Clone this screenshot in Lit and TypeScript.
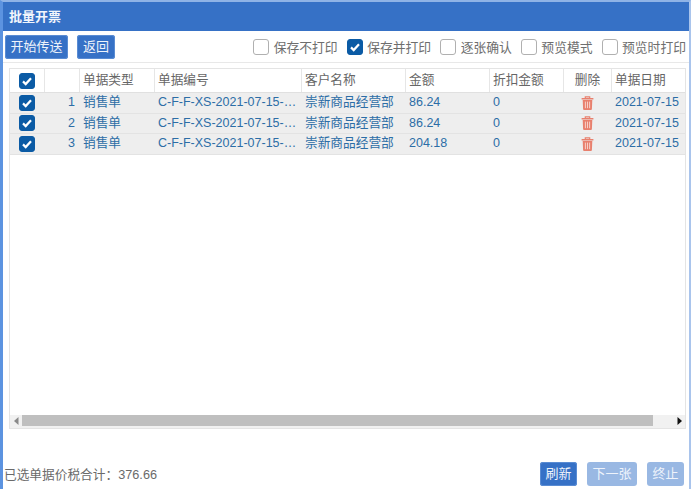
import { LitElement, html, css, svg } from "lit";
import { customElement, property } from "lit/decorators.js";

interface Row {
  no: number;
  type: string;
  code: string;
  customer: string;
  amount: string;
  discount: string;
  date: string;
}

// the reference only shows the truncated bill number, so keep it as shown
const rows: Row[] = [
  { no: 1, type: "销售单", code: "C-F-F-XS-2021-07-15-…", customer: "崇新商品经营部", amount: "86.24", discount: "0", date: "2021-07-15" },
  { no: 2, type: "销售单", code: "C-F-F-XS-2021-07-15-…", customer: "崇新商品经营部", amount: "86.24", discount: "0", date: "2021-07-15" },
  { no: 3, type: "销售单", code: "C-F-F-XS-2021-07-15-…", customer: "崇新商品经营部", amount: "204.18", discount: "0", date: "2021-07-15" },
];

const options = [
  { label: "保存不打印", checked: false },
  { label: "保存并打印", checked: true },
  { label: "逐张确认", checked: false },
  { label: "预览模式", checked: false },
  { label: "预览时打印", checked: false },
];

const trash = svg`<svg width="13" height="14" viewBox="0 0 13 14">
  <path d="M4.3 1.9V.8h4.4v1.1" fill="none" stroke="#e8806e" stroke-width="1.2"/>
  <path d="M.6 2h11.8v1.5H.6z" fill="#e8806e"/>
  <path d="M1.7 4h9.6l-.4 9a1 1 0 0 1-1 1H3.1a1 1 0 0 1-1-1z" fill="#e8806e"/>
  <path d="M4.4 5.6v6.6M6.5 5.6v6.6M8.6 5.6v6.6" stroke="#f6cfc8" stroke-width="1"/>
</svg>`;

@customElement("check-box")
export class CheckBox extends LitElement {
  @property({ type: Boolean }) checked = false;

  static styles = css`
    :host {
      display: block;
      width: 16px;
      height: 16px;
    }
    .box {
      width: 16px;
      height: 16px;
      box-sizing: border-box;
      border-radius: 3px;
      border: 1px solid #b0b0b0;
      background: #fff;
    }
    .box.on {
      border-color: #0b5ba5;
      background: #0b5ba5;
    }
    svg {
      display: block;
    }
  `;

  render() {
    return html`<div class="box ${this.checked ? "on" : ""}">
      ${this.checked
        ? html`<svg width="14" height="14" viewBox="0 0 14 14">
            <path d="M3 7.4l2.7 2.7L11 4.2" fill="none" stroke="#fff" stroke-width="2.2"/>
          </svg>`
        : ""}
    </div>`;
  }
}

@customElement("app-root")
export class AppRoot extends LitElement {
  static styles = css`
    :host {
      display: block;
      width: 691px;
      height: 489px;
      overflow: hidden;
      font-family: "Liberation Sans", "Noto Sans CJK SC", sans-serif;
      font-size: 12.7px;
      color: #666;
      background: #fff;
    }
    .window {
      box-sizing: border-box;
      height: 489px;
      display: flex;
      flex-direction: column;
      border-top: 2px solid #8fb3e6;
      border-left: 3px solid #5c93e0;
      border-right: 2px solid #a9c4ec;
    }
    .title {
      height: 29px;
      flex: none;
      background: #3671c6;
      color: #f2f6fc;
      font-weight: 700;
      font-size: 13px;
      line-height: 29px;
      padding-left: 6px;
    }
    .toolbar {
      height: 32px;
      flex: none;
      display: flex;
      align-items: center;
      padding: 0 3px 0 2px;
      border-bottom: 1px solid #e8e8e8;
      box-sizing: border-box;
    }
    .btn {
      height: 24px;
      line-height: 24px;
      padding: 0 5.5px;
      border-radius: 3px;
      background: #3671c6;
      color: #eef3fb;
      font-size: 13px;
      box-shadow: 0 0 0 1px #5a8cd3 inset;
    }
    .btn.off {
      background: #99b8e3;
      box-shadow: none;
    }
    .back {
      margin-left: 9px;
      padding: 0 6px;
    }
    .options {
      margin-left: auto;
      display: flex;
      gap: 9px;
    }
    .option {
      display: flex;
      align-items: center;
      gap: 4.5px;
      font-size: 12.8px;
      color: #6e6e6e;
    }
    .grid-wrap {
      margin: 5px 3px 0 6px;
      height: 361px;
      flex: none;
      box-sizing: border-box;
      border: 1px solid #e4e4e4;
      display: flex;
      flex-direction: column;
    }
    .body {
      flex: 1;
      overflow: hidden;
    }
    .row {
      display: grid;
      grid-template-columns: 35px 35px 75px 147px 104px 84px 74px 48px 72px;
      align-items: center;
      height: 20.5px;
      box-sizing: border-box;
      background: #eeeeee;
      color: #2c6da6;
      border-bottom: 1px solid #e3e3e3;
      white-space: nowrap;
    }
    .row.head {
      height: 24px;
      background: #fff;
      color: #666;
      border-bottom: 1px solid #e0e0e0;
      align-items: stretch;
    }
    .cell {
      padding: 0 3px;
      min-width: 0;
      line-height: 19px;
    }
    .cell.pick {
      padding: 0 0 0 9px;
    }
    .head .cell {
      display: flex;
      align-items: center;
      line-height: 21px;
      border-right: 1px solid #e6e6e6;
    }
    .head .cell:last-child {
      border-right: none;
    }
    .latin {
      font-size: 12.5px;
    }
    .center {
      display: flex;
      justify-content: center;
    }
    .cell.trash {
      padding: 0 5px 0 3px;
    }
    .num {
      text-align: right;
      padding-right: 5px;
    }
    .scrollbar {
      flex: none;
      height: 13px;
      display: flex;
      align-items: stretch;
      background: #f1f1f1;
    }
    .arrow {
      width: 12px;
      flex: none;
      padding-bottom: 2px;
      display: flex;
      align-items: center;
      justify-content: center;
    }
    .thumb {
      width: 631px;
      flex: none;
      margin-bottom: 2px;
      background: #bfbfbf;
    }
    .track {
      flex: 1;
    }
    .footer {
      flex: 1;
      display: flex;
      align-items: flex-end;
      padding: 0 5px 3px 1px;
      color: #6a6a6a;
    }
    .sum {
      flex: 1;
      line-height: 22px;
    }
    .actions {
      display: flex;
      gap: 10px;
    }
  `;

  render() {
    return html`<div class="window">
      <div class="title">批量开票</div>
      <div class="toolbar">
        <div class="btn">开始传送</div>
        <div class="btn back">返回</div>
        <div class="options">
          ${options.map(
            (o) => html`<div class="option">
              <check-box ?checked=${o.checked}></check-box><span>${o.label}</span>
            </div>`
          )}
        </div>
      </div>
      <div class="grid-wrap">
        <div class="body">
          <div class="row head">
            <div class="cell pick"><check-box checked></check-box></div>
            <div class="cell"></div>
            <div class="cell"><span class="label">单据类型</span></div>
            <div class="cell"><span class="label">单据编号</span></div>
            <div class="cell"><span class="label">客户名称</span></div>
            <div class="cell"><span class="label">金额</span></div>
            <div class="cell"><span class="label">折扣金额</span></div>
            <div class="cell center"><span class="label">删除</span></div>
            <div class="cell"><span class="label">单据日期</span></div>
          </div>
          ${rows.map(
            (r) => html`<div class="row">
              <div class="cell pick"><check-box checked></check-box></div>
              <div class="cell num latin">${r.no}</div>
              <div class="cell">${r.type}</div>
              <div class="cell latin">${r.code}</div>
              <div class="cell">${r.customer}</div>
              <div class="cell latin">${r.amount}</div>
              <div class="cell latin">${r.discount}</div>
              <div class="cell center trash">${trash}</div>
              <div class="cell latin">${r.date}</div>
            </div>`
          )}
        </div>
        <div class="scrollbar">
          <div class="arrow">
            <svg width="5" height="8" viewBox="0 0 5 8"><path d="M4.5 0v8L0 4z" fill="#8a8a8a"/></svg>
          </div>
          <div class="thumb"></div>
          <div class="track"></div>
          <div class="arrow">
            <svg width="5" height="8" viewBox="0 0 5 8"><path d="M.5 0v8L5 4z" fill="#111"/></svg>
          </div>
        </div>
      </div>
      <div class="footer">
        <div class="sum">已选单据价税合计：376.66</div>
        <div class="actions">
          <div class="btn">刷新</div>
          <div class="btn off">下一张</div>
          <div class="btn off">终止</div>
        </div>
      </div>
    </div>`;
  }
}
